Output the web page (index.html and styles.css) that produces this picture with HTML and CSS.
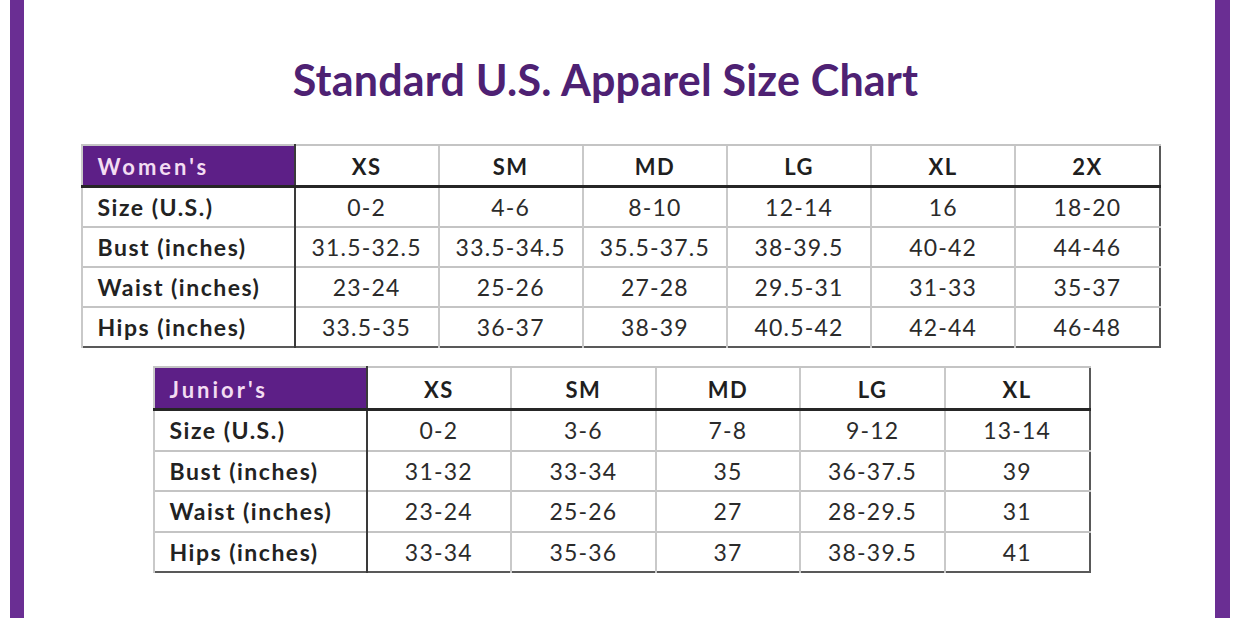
FILE: index.html
```html
<!DOCTYPE html>
<html>
<head>
<meta charset="utf-8">
<link rel="stylesheet" href="styles.css">
</head>
<body>
<div class="frame">
  <h1 class="title">Standard U.S. Apparel Size Chart</h1>
  <table class="chart women">
    <colgroup><col class="c-label"><col><col><col><col><col><col></colgroup>
    <thead>
      <tr><th class="cat">Women's</th><th>XS</th><th>SM</th><th>MD</th><th>LG</th><th>XL</th><th>2X</th></tr>
    </thead>
    <tbody>
      <tr><td class="lbl">Size (U.S.)</td><td>0-2</td><td>4-6</td><td>8-10</td><td>12-14</td><td>16</td><td>18-20</td></tr>
      <tr><td class="lbl">Bust (inches)</td><td>31.5-32.5</td><td>33.5-34.5</td><td>35.5-37.5</td><td>38-39.5</td><td>40-42</td><td>44-46</td></tr>
      <tr><td class="lbl">Waist (inches)</td><td>23-24</td><td>25-26</td><td>27-28</td><td>29.5-31</td><td>31-33</td><td>35-37</td></tr>
      <tr><td class="lbl">Hips (inches)</td><td>33.5-35</td><td>36-37</td><td>38-39</td><td>40.5-42</td><td>42-44</td><td>46-48</td></tr>
    </tbody>
  </table>
  <table class="chart junior">
    <colgroup><col class="c-label"><col><col><col><col><col></colgroup>
    <thead>
      <tr><th class="cat">Junior's</th><th>XS</th><th>SM</th><th>MD</th><th>LG</th><th>XL</th></tr>
    </thead>
    <tbody>
      <tr><td class="lbl">Size (U.S.)</td><td>0-2</td><td>3-6</td><td>7-8</td><td>9-12</td><td>13-14</td></tr>
      <tr><td class="lbl">Bust (inches)</td><td>31-32</td><td>33-34</td><td>35</td><td>36-37.5</td><td>39</td></tr>
      <tr><td class="lbl">Waist (inches)</td><td>23-24</td><td>25-26</td><td>27</td><td>28-29.5</td><td>31</td></tr>
      <tr><td class="lbl">Hips (inches)</td><td>33-34</td><td>35-36</td><td>37</td><td>38-39.5</td><td>41</td></tr>
    </tbody>
  </table>
</div>
</body>
</html>
```

FILE: styles.css
```css
html, body {
  margin: 0;
  padding: 0;
  background: #ffffff;
}

body {
  font-family: Lato, "Open Sans", "Liberation Sans", sans-serif;
  color: #262626;
}

.frame {
  box-sizing: border-box;
  margin-left: 10px;
  width: 1220px;
  height: 618px;
  border-left: 14px solid #6a2e93;
  border-right: 15px solid #6a2e93;
  display: flex;
  flex-direction: column;
  align-items: center;
  overflow: hidden;
}

.title {
  margin: 54px 28px 0 0;
  font-size: 43px;
  line-height: 52px;
  font-weight: 700;
  letter-spacing: 0.2px;
  color: #4e2173;
  white-space: nowrap;
}

.chart {
  border-collapse: collapse;
  table-layout: fixed;
  border: 2px solid #595959;
  font-size: 23px;
  position: relative;
  left: 1px;
}

.women {
  width: 1080px;
  margin-top: 38px;
}

.junior {
  width: 938px;
  margin-top: 18px;
  left: 2px;
}

.c-label {
  width: 213px;
}

.chart th,
.chart td {
  padding: 0;
  text-align: center;
  border-left: 2px solid #c9c9c9;
  border-top: 2px solid #c4c4c4;
  white-space: nowrap;
}

.chart th {
  height: 38px;
  font-size: 22px;
  font-weight: 700;
  letter-spacing: 1.5px;
  color: #1f1f1f;
  border-bottom: 3px solid #262626;
  padding-top: 2px;
}

.women th {
  height: 37px;
}

.chart td {
  height: 38px;
  font-weight: 400;
  letter-spacing: 1.2px;
  color: #2b2b2b;
}

.junior td {
  height: 38.5px;
}

.chart .cat {
  background: #5d1f87;
  color: #f3dcf2;
  text-align: left;
  letter-spacing: 3px;
  padding-left: 15px;
  border-right: 2px solid #3a3a3a;
}

.chart .lbl {
  text-align: left;
  padding-left: 15px;
  font-weight: 700;
  letter-spacing: 1.5px;
  color: #222222;
  border-right: 2px solid #3a3a3a;
}
```
